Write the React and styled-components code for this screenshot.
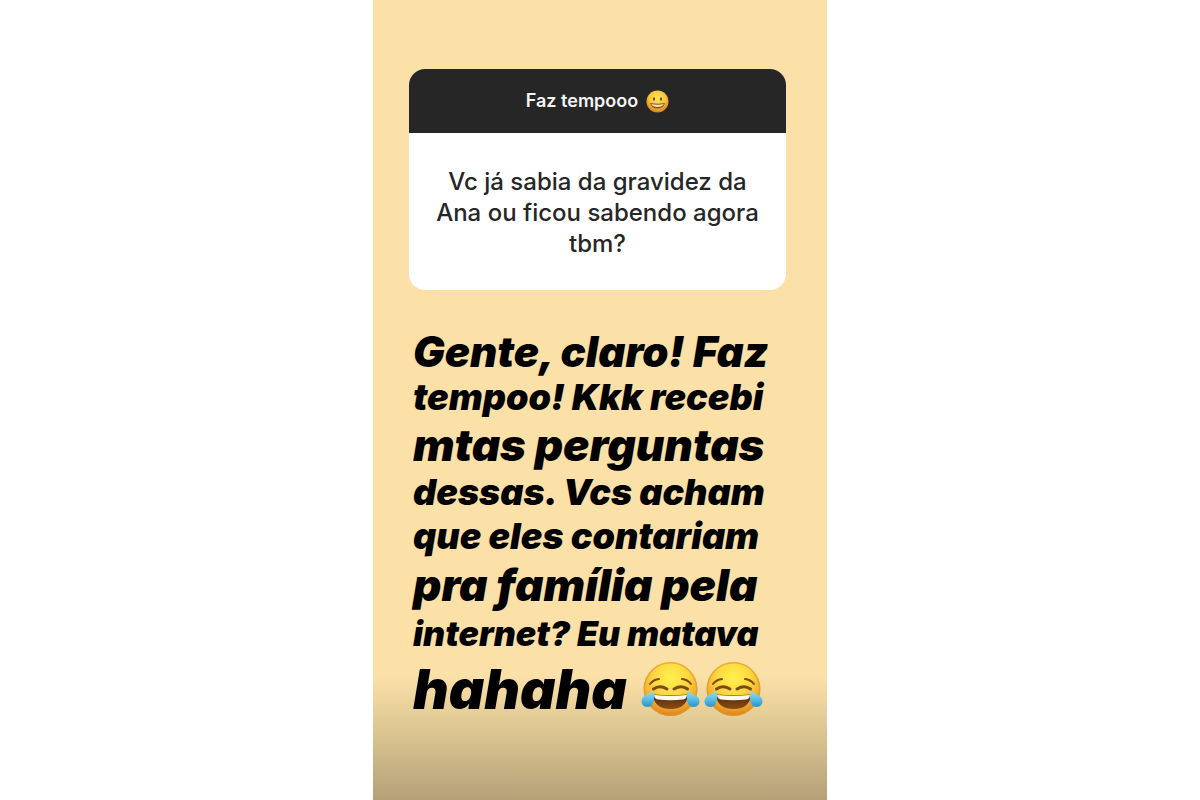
import { createGlobalStyle, styled } from 'styled-components';

const GlobalStyle = createGlobalStyle`
    body{
        margin: 0;
        background-color: #ffffff;
        font-family: Inter, "Liberation Sans", sans-serif;
    }
`

const Page = styled.main`
    display: flex;
    justify-content: center;
    min-height: 100vh;
`

const Story = styled.article`
    width: 100%;
    max-width: 454px;
    padding: 69px 41px 0 36px;
    box-sizing: border-box;
    background: linear-gradient(to top, #b5a078 0, #d9c38f 64px, #fbe1a8 124px);
`

const Card = styled.section`
    border-radius: 16px;
    overflow: hidden;
    background-color: #ffffff;
`

const CardHeader = styled.header`
    display: flex;
    justify-content: center;
    align-items: center;
    gap: 8px;
    height: 64px;
    background-color: #262626;
`

const Title = styled.h1`
    margin: 0;
    font-size: 18px;
    font-weight: 600;
    line-height: 24px;
    color: #f5f5f5;
`

const Question = styled.p`
    margin: 0;
    padding: 33px 20px 31px;
    font-size: 24px;
    font-weight: 500;
    line-height: 31px;
    text-align: center;
    color: #262626;
`

const Answer = styled.p`
    margin: 40px 0 0;
    padding-left: 4px;
    font-style: italic;
    font-weight: 900;
    color: #000000;
`

const Line = styled.span`
    display: flex;
    align-items: center;
    gap: 14px;
    font-size: ${({ $size }) => $size}px;
    line-height: ${({ $height }) => $height}px;
    white-space: nowrap;
`

const Emojis = styled.span`
    display: flex;
    gap: 4px;
`

const lines = [
    { text: "Gente, claro! Faz", size: 42, height: 44 },
    { text: "tempoo! Kkk recebi", size: 36, height: 46 },
    { text: "mtas perguntas", size: 44, height: 50 },
    { text: "dessas. Vcs acham", size: 36, height: 44 },
    { text: "que eles contariam", size: 36, height: 44 },
    { text: "pra família pela", size: 44, height: 54 },
    { text: "internet? Eu matava", size: 34, height: 44 },
    { text: "hahaha", size: 55, height: 66, laughs: 2 },
]

const Grin = () => (
    <svg width="23" height="23" viewBox="0 0 46 46" role="img" aria-label="sorriso">
        <defs>
            <radialGradient id="grinFace" cx="50%" cy="36%" r="66%">
                <stop offset="0" stopColor="#ffe65c" />
                <stop offset="0.55" stopColor="#f8c43e" />
                <stop offset="1" stopColor="#d67c1a" />
            </radialGradient>
        </defs>
        <circle cx="23" cy="23" r="22" fill="url(#grinFace)" />
        <ellipse cx="16" cy="18" rx="2.2" ry="3.4" fill="#7a4a14" />
        <ellipse cx="30" cy="18" rx="2.2" ry="3.4" fill="#7a4a14" />
        <path d="M8 26 Q23 29 38 26 Q35 37 23 37 Q11 37 8 26Z" fill="#8a5418" />
        <path d="M10.5 28 Q23 31 35.5 28 Q33 34 23 34 Q13 34 10.5 28Z" fill="#f7e3a8" />
    </svg>
)

const Laugh = () => (
    <svg width="59" height="56" viewBox="0 0 59 56" role="img" aria-label="chorando de rir">
        <defs>
            <radialGradient id="laughFace" cx="50%" cy="30%" r="70%">
                <stop offset="0" stopColor="#fff04e" />
                <stop offset="0.45" stopColor="#fdd83f" />
                <stop offset="0.75" stopColor="#f3ae2f" />
                <stop offset="1" stopColor="#db7f1a" />
            </radialGradient>
            <linearGradient id="tear" x1="0" y1="0" x2="0" y2="1">
                <stop offset="0" stopColor="#9adcf0" />
                <stop offset="0.5" stopColor="#5cbfe6" />
                <stop offset="1" stopColor="#2c92c4" />
            </linearGradient>
            <linearGradient id="mouth" x1="0" y1="0" x2="0" y2="1">
                <stop offset="0" stopColor="#4f2c0c" />
                <stop offset="1" stopColor="#8a4a14" />
            </linearGradient>
        </defs>
        <circle cx="29.5" cy="28" r="27" fill="url(#laughFace)" />
        <circle cx="29.5" cy="28" r="26.2" fill="none" stroke="#dd9a30" strokeWidth="1.4" opacity="0.7" />
        <g fill="none" stroke="#7d4a10" strokeLinecap="round">
            <path d="M9 23 Q12.5 18.5 18 18" strokeWidth="2" />
            <path d="M41 18 Q46.5 18.5 50 23" strokeWidth="2" />
            <path d="M12.5 28 Q18.5 23.5 26 28" strokeWidth="3" />
            <path d="M33 28 Q40.5 23.5 46.5 28" strokeWidth="3" />
        </g>
        <path d="M12 33.5 Q29.5 35 47 33.5 Q46 48 29.5 48 Q13 48 12 33.5Z" fill="url(#mouth)" />
        <path d="M13 34 Q29.5 35.5 46 34 Q45.5 38 42 38.6 Q29.5 40 17 38.6 Q13.5 38 13 34Z" fill="#fffaf0" />
        <path d="M12.5 30 C14 38 13 46 6.5 46 C1.5 46 -0.5 42 1 38 C3 33.5 8 33.5 12.5 30Z" fill="url(#tear)" />
        <path d="M46.5 30 C45 38 46 46 52.5 46 C57.5 46 59.5 42 58 38 C56 33.5 51 33.5 46.5 30Z" fill="url(#tear)" />
    </svg>
)

const App = () => {
    return (
        <>
            <GlobalStyle />
            <Page>
                <Story>
                    <Card>
                        <CardHeader>
                            <Title>Faz tempooo</Title>
                            <Grin />
                        </CardHeader>
                        <Question>Vc já sabia da gravidez da Ana ou ficou sabendo agora tbm?</Question>
                    </Card>

                    <Answer>
                        {lines.map(({ text, size, height, laughs }) => (
                            <Line key={text} $size={size} $height={height}>
                                {text}
                                {laughs && (
                                    <Emojis>
                                        {Array.from({ length: laughs }, (_, i) => <Laugh key={i} />)}
                                    </Emojis>
                                )}
                            </Line>
                        ))}
                    </Answer>
                </Story>
            </Page>
        </>
    )
}

export default App
